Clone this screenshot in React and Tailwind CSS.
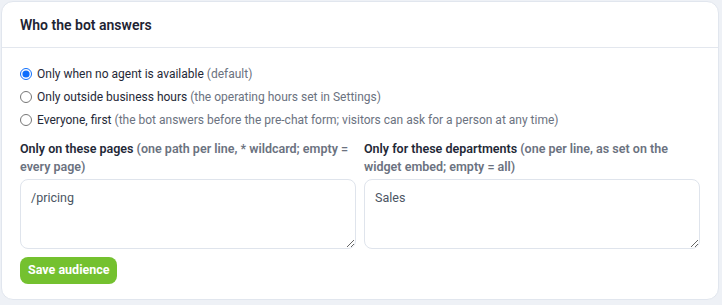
import { useState } from "react";

const modes = [
  { id: "no_agent", label: "Only when no agent is available", hint: "(default)" },
  { id: "after_hours", label: "Only outside business hours", hint: "(the operating hours set in Settings)" },
  {
    id: "everyone",
    label: "Everyone, first",
    hint: "(the bot answers before the pre-chat form; visitors can ask for a person at any time)",
  },
];

export default function App() {
  const [mode, setMode] = useState("no_agent");
  const [pages, setPages] = useState("/pricing");
  const [depts, setDepts] = useState("Sales");

  return (
    <div className="min-h-screen bg-[#eef1f6] p-px font-['Roboto',sans-serif] text-[#1f2937]">
      <div className="h-[299px] w-[718px] rounded-xl border border-[#e1e6ee] bg-white">
        <div className="border-b border-[#e3e7ee] px-[18px] pb-[13px] pt-[14px]">
          <h2 className="text-[14px] font-semibold leading-[18px] text-[#1e2433]">Who the bot answers</h2>
        </div>

        <div className="px-[18px] pt-[17px]">
          <div className="flex flex-col gap-[5px]">
            {modes.map((m) => (
              <label key={m.id} className="flex h-[18px] items-center gap-[5px] text-[12px] leading-[18px]">
                <input
                  type="radio"
                  name="mode"
                  checked={mode === m.id}
                  onChange={() => setMode(m.id)}
                  className="m-0 h-[12px] w-[12px] accent-[#0d6efd]"
                />
                <span>
                  {m.label} <span className="text-[#6b7280]">{m.hint}</span>
                </span>
              </label>
            ))}
          </div>

          <div className="mt-[11px] grid grid-cols-2 gap-[8px]">
            <div className="flex flex-col">
              <p className="text-[12.5px] font-semibold leading-[18px]">
                Only on these pages{" "}
                <span className="text-[#6b7280]">(one path per line, * wildcard; empty = every page)</span>
              </p>
              <textarea
                value={pages}
                onChange={(e) => setPages(e.target.value)}
                className="mt-[3px] h-[70px] rounded-lg border border-[#dfe4ec] px-[10px] py-[9px] text-[12.5px] leading-[18px] text-[#4b5563] outline-none"
              />
            </div>
            <div className="flex flex-col">
              <p className="text-[12.5px] font-semibold leading-[18px]">
                Only for these departments{" "}
                <span className="text-[#6b7280]">(one per line, as set on the widget embed; empty = all)</span>
              </p>
              <textarea
                value={depts}
                onChange={(e) => setDepts(e.target.value)}
                className="mt-[3px] h-[70px] rounded-lg border border-[#dfe4ec] px-[10px] py-[9px] text-[12.5px] leading-[18px] text-[#4b5563] outline-none"
              />
            </div>
          </div>

          <button className="mt-[8px] h-[27px] rounded-lg bg-[#74c12f] px-[8px] text-[12.5px] font-bold text-white">
            Save audience
          </button>
        </div>
      </div>
    </div>
  );
}
